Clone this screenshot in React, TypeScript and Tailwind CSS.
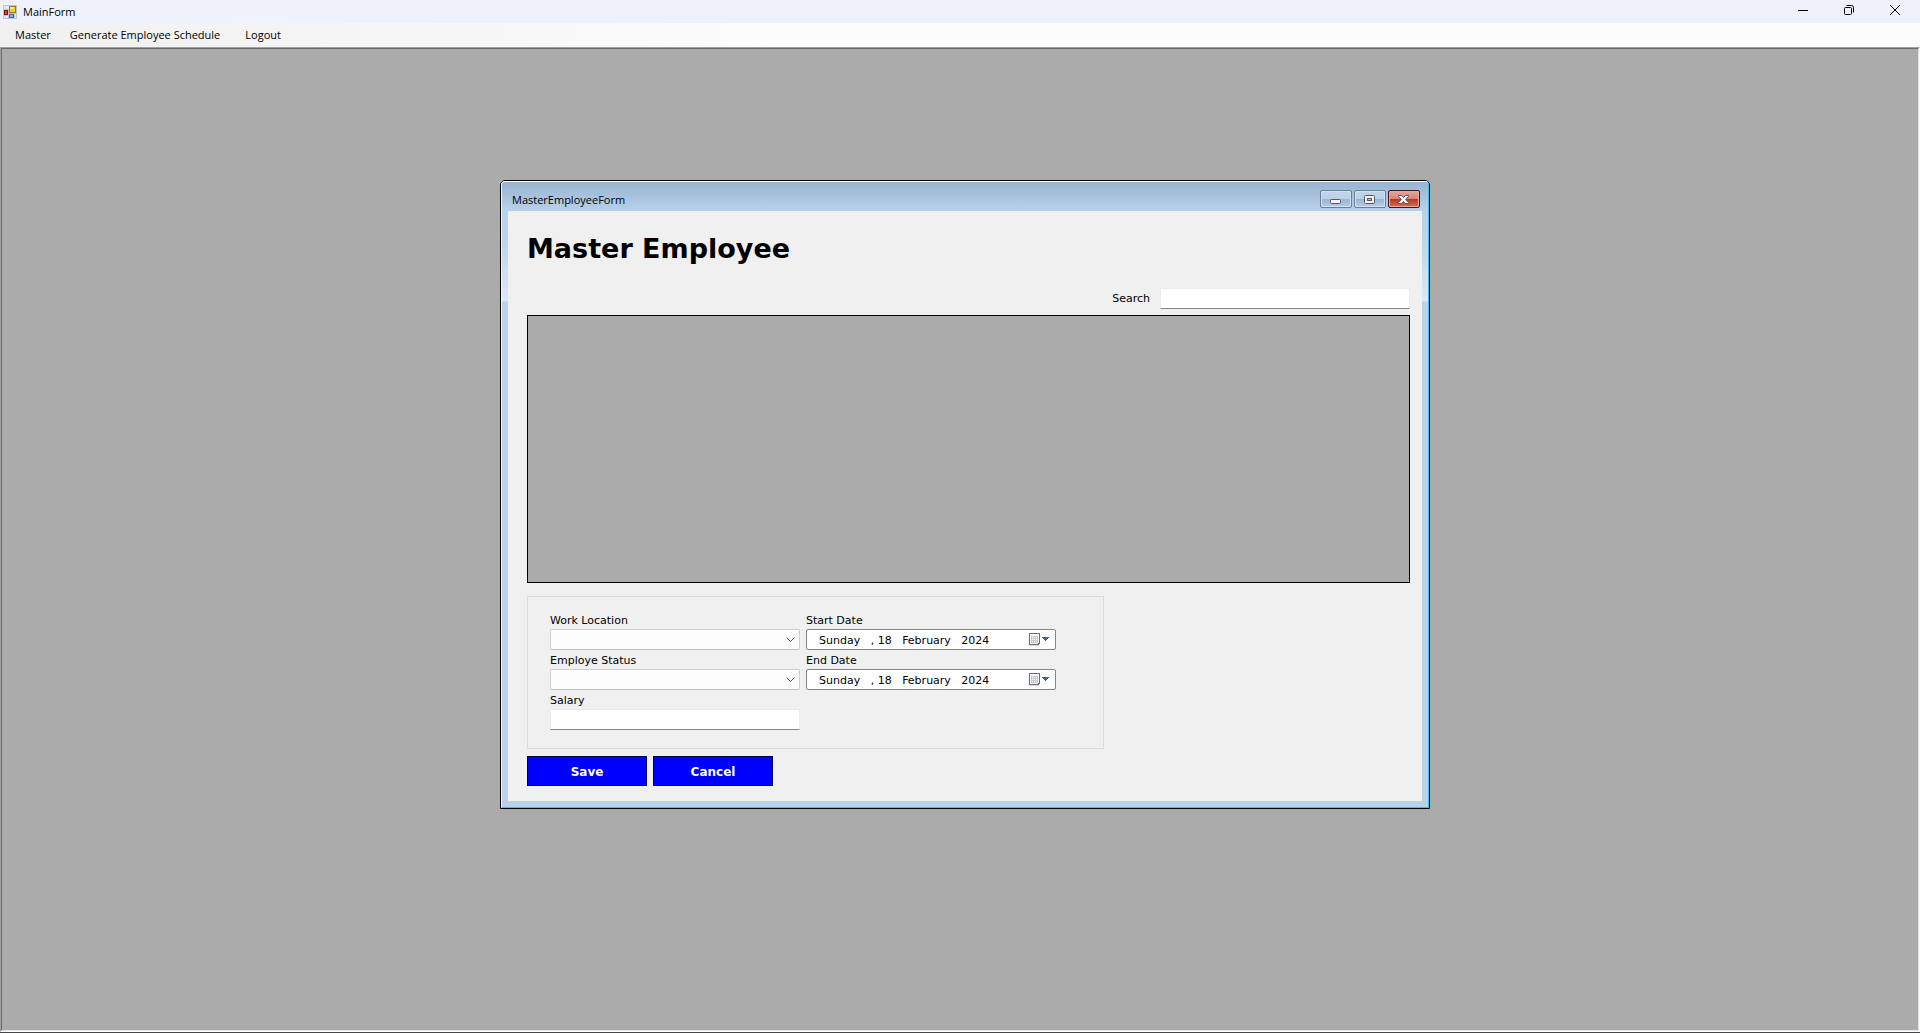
import { ReactNode } from 'react';

const uiFont = "font-['Open_Sans','Noto_Sans',sans-serif] text-[11px] leading-4";
const formFont = "font-['DejaVu_Sans',Verdana,sans-serif] text-[11px] leading-4";

function AppIcon() {
  return (
    <svg width="14" height="14" viewBox="0 0 14 14" shapeRendering="crispEdges" aria-hidden="true">
      <rect width="14" height="14" fill="#c3c5c9" />
      <rect x="1" y="1" width="5" height="3" fill="#e4e8ee" />
      <rect x="1" y="11" width="4" height="2" fill="#e4e8ee" />
      <rect x="12" y="9" width="1" height="4" fill="#e4e8ee" />
      <rect x="6" y="1" width="7" height="7" fill="#a87808" />
      <rect x="7" y="2" width="5" height="5" fill="#fbc92f" />
      <rect x="7" y="2" width="4" height="2" fill="#fee27c" />
      <rect x="1" y="5" width="4" height="5" fill="#8d1109" />
      <rect x="2" y="6" width="2" height="3" fill="#d8442f" />
      <rect x="6" y="9" width="5" height="4" fill="#3567c8" />
      <rect x="7" y="10" width="3" height="2" fill="#7fb0f5" />
    </svg>
  );
}

function CaptionButton({ label, children }: { label: string; children: ReactNode }) {
  return (
    <button type="button" aria-label={label} className="flex h-full w-[46px] items-center justify-center">
      {children}
    </button>
  );
}

function AeroButton({ label, danger, children }: { label: string; danger?: boolean; children: ReactNode }) {
  const skin = danger
    ? 'border-[#431422] bg-linear-to-b from-[#e6a79c] from-0% via-[#d98577] via-45% to-[#d0705c] shadow-[inset_0_0_0_1px_#e9a89c]'
    : 'border-[#6b7f9b] bg-linear-to-b from-[#c1d5ea] to-[#b4cce4] shadow-[inset_0_0_0_1px_#cfe0f2]';
  return (
    <button
      type="button"
      aria-label={label}
      className={'flex h-[18px] w-8 flex-col rounded-[2px] border p-px ' + skin}
    >
      <span className="relative flex w-full flex-1 items-center justify-center">
        <span
          className={
            danger
              ? 'absolute inset-x-0 top-[7px] bottom-0 bg-linear-to-b from-[#b5351b] to-[#d0684f]'
              : 'absolute inset-x-0 top-[7px] bottom-0 bg-linear-to-b from-[#98b2d0] to-[#b3cbe5]'
          }
        />
        <span className="relative flex pr-px">{children}</span>
      </span>
    </button>
  );
}

function ComboBox({ id, label }: { id: string; label: string }) {
  return (
    <div className="flex flex-col">
      <label htmlFor={id} className="h-[17px] pt-px">{label}</label>
      <div className="relative mb-0.5 flex">
        <select
          id={id}
          className="h-[21px] w-full appearance-none rounded-[2px] border border-[#d0d0d0] border-b-[#bdbdbd] bg-[#fdfdfd] px-1 outline-none"
        >
          <option value=""></option>
        </select>
        <svg
          width="9" height="6" viewBox="0 0 9 6" fill="none" stroke="#606060"
          className="pointer-events-none absolute top-2 right-[5px]" aria-hidden="true"
        >
          <path d="M0.5 0.5 L4.5 4.5 L8.5 0.5" />
        </svg>
      </div>
    </div>
  );
}

function TextBox({ id }: { id: string }) {
  return (
    <input
      id={id}
      type="text"
      className="h-[21px] w-full border border-[#ebebeb] border-b-[#868686] bg-white px-1 outline-none"
    />
  );
}

function DateBox({ id, label }: { id: string; label: string }) {
  return (
    <div className="flex flex-col">
      <label htmlFor={id} className="h-[17px] pt-px">{label}</label>
      <div className="mb-0.5 flex h-[21px] items-center rounded-[2px] border border-[#848484] bg-white pr-[5px] pl-3">
        <input
          id={id}
          type="text"
          defaultValue={'Sunday   , 18   February   2024'}
          className="h-[19px] min-w-0 flex-1 bg-transparent pt-0.5 whitespace-pre outline-none"
        />
        <button type="button" aria-label={'Pick ' + label} className="flex">
          <svg width="21" height="14" viewBox="0 0 21 14" shapeRendering="crispEdges" aria-hidden="true">
            <path d="M1 12h9v1H1z" fill="#d9d5d5" />
            <path d="M0 0h11v10l-2 2H0z" fill="#766a6b" />
            <path d="M1 1h9v8H8v2H1z" fill="#f5f7fa" />
            <path d="M2 3h7v6H8v1H2z" fill="#c3c9d4" />
            <path
              d="M3 4h1v1H3zM5 4h1v1H5zM7 4h1v1H7zM3 6h1v1H3zM5 6h1v1H5zM7 6h1v1H7zM3 8h1v1H3zM5 8h1v1H5zM7 8h1v1H7z"
              fill="#ffffff"
            />
            <path d="M8 9h2v1H9v1H8z" fill="#e4dfdf" />
            <path d="M13 4h7v1h-1v1h-1v1h-1v1h-1V7h-1V6h-1V5h-1z" fill="#46618f" />
          </svg>
        </button>
      </div>
    </div>
  );
}

function EmployeeWindow() {
  return (
    <section
      aria-label="MasterEmployeeForm"
      className="absolute top-[131px] left-[498px] w-[930px] rounded-t-[5px] border border-black bg-[#b9d1ea]"
    >
      <div className="rounded-t-[4px] border-t border-r border-b border-l border-t-white border-r-[#35c4e8] border-b-[#35c4e8] border-l-[#f4f8fc]">
        <header className="flex h-[29px] items-start justify-between rounded-t-[3px] bg-linear-to-b from-[#98b4d2] to-[#b9d1ea] pr-2 pl-2.5">
          <h2 className={'pt-2.5 ' + uiFont}>MasterEmployeeForm</h2>
          <div className="flex gap-0.5 pt-2">
            <AeroButton label="Minimize">
              <svg width="11" height="5" viewBox="0 0 11 5" aria-hidden="true" className="mt-1">
                <rect x="0.5" y="0.5" width="10" height="4" rx="1" fill="#f5f5f5" stroke="#535666" />
              </svg>
            </AeroButton>
            <AeroButton label="Maximize">
              <svg width="11" height="9" viewBox="0 0 11 9" aria-hidden="true">
                <rect x="0.5" y="0.5" width="10" height="8" rx="1" fill="#f5f5f5" stroke="#535666" />
                <rect x="3.5" y="3.5" width="4" height="2" fill="#a9c3de" stroke="#535666" />
              </svg>
            </AeroButton>
            <AeroButton label="Close" danger>
              <svg width="11" height="9" viewBox="0 0 11 9" aria-hidden="true">
                <path
                  d="M0.5 0.5H3.5L5.5 2.5L7.5 0.5H10.5V1.5L7.7 4.5L10.5 7.5V8.5H7.5L5.5 6.5L3.5 8.5H0.5V7.5L3.3 4.5L0.5 1.5z"
                  fill="#f5f5f5" stroke="#535666"
                />
              </svg>
            </AeroButton>
          </div>
        </header>
        <div className="flex">
          <div className="w-1.5 bg-[linear-gradient(#b9d1ea,#b9d1ea_20px,#dce8f5_90px,#b9d1ea_91px)]" />
          <div className={'min-w-0 flex-1 bg-[#f0f0f0] pr-3 pb-[15px] pl-[19px] text-black ' + formFont}>
            <h1 className="pt-5 text-[27px] leading-9 font-bold">Master Employee</h1>
            <div className="mt-[21px] flex items-center justify-end gap-2.5">
              <label htmlFor="search">Search</label>
              <div className="w-[250px]"><TextBox id="search" /></div>
            </div>
            <div role="grid" aria-label="Employees" className="mt-1.5 h-[268px] border border-black bg-[#ababab]" />
            <fieldset className="mt-[13px] w-[577px] border border-[#dcdcdc] pt-[15px] pb-[18px] pl-[22px]">
              <div className="grid grid-cols-[250px_250px] gap-x-1.5">
                <ComboBox id="location" label="Work Location" />
                <DateBox id="start" label="Start Date" />
                <ComboBox id="status" label="Employe Status" />
                <DateBox id="end" label="End Date" />
                <div className="flex flex-col">
                  <label htmlFor="salary" className="h-[17px] pt-px">Salary</label>
                  <TextBox id="salary" />
                </div>
              </div>
            </fieldset>
            <div className="mt-[7px] flex gap-1.5 text-xs font-bold text-white">
              <button type="button" className="h-[30px] w-[120px] border border-[#00004a] bg-[#0000ff] pt-0.5">Save</button>
              <button type="button" className="h-[30px] w-[120px] border border-[#00004a] bg-[#0000ff] pt-0.5">Cancel</button>
            </div>
          </div>
          <div className="w-1.5 bg-[linear-gradient(#b9d1ea,#b9d1ea_20px,#dce8f5_90px,#b9d1ea_91px)]" />
        </div>
        <div className="h-1.5" />
      </div>
    </section>
  );
}

export default function App() {
  return (
    <div className="flex h-screen flex-col overflow-hidden border-b border-[#45454a] bg-white text-black">
      <header className="flex h-[23px] shrink-0 items-center justify-between bg-[#eef3fb]">
        <div className={'flex items-center gap-1.5 pl-[3px] ' + uiFont}>
          <AppIcon />
          <span>MainForm</span>
        </div>
        <div className="flex h-full pr-0.5 pb-[3px]">
          <CaptionButton label="Minimize">
            <svg width="10" height="10" viewBox="0 0 10 10" stroke="#000" aria-hidden="true">
              <path d="M0 5.5H10" />
            </svg>
          </CaptionButton>
          <CaptionButton label="Restore">
            <svg width="10" height="10" viewBox="0 0 10 10" fill="none" stroke="#000" aria-hidden="true">
              <rect x="0.5" y="2.5" width="7" height="7" rx="1" />
              <path d="M2.5 0.5H7.5A2 2 0 0 1 9.5 2.5V7.5" />
            </svg>
          </CaptionButton>
          <CaptionButton label="Close">
            <svg width="10" height="10" viewBox="0 0 10 10" stroke="#000" aria-hidden="true">
              <path d="M0 0L10 10M10 0L0 10" />
            </svg>
          </CaptionButton>
        </div>
      </header>
      <nav className={'flex h-6 shrink-0 items-center bg-linear-to-r from-[#f0f0f0] to-[#fcfcfc] to-40% pl-1.5 ' + uiFont}>
        <button type="button" className="px-[9px]">Master</button>
        <button type="button" className="pr-4 pl-2.5">Generate Employee Schedule</button>
        <button type="button" className="px-[9px]">Logout</button>
      </nav>
      <div className="flex min-h-0 flex-1 border border-t-[#a0a0a0] border-r-white border-b-white border-l-[#a0a0a0]">
        <main className="relative flex-1 border border-t-[#696969] border-r-[#e3e3e3] border-b-[#e3e3e3] border-l-[#696969] bg-[#ababab]">
          <EmployeeWindow />
        </main>
      </div>
    </div>
  );
}
